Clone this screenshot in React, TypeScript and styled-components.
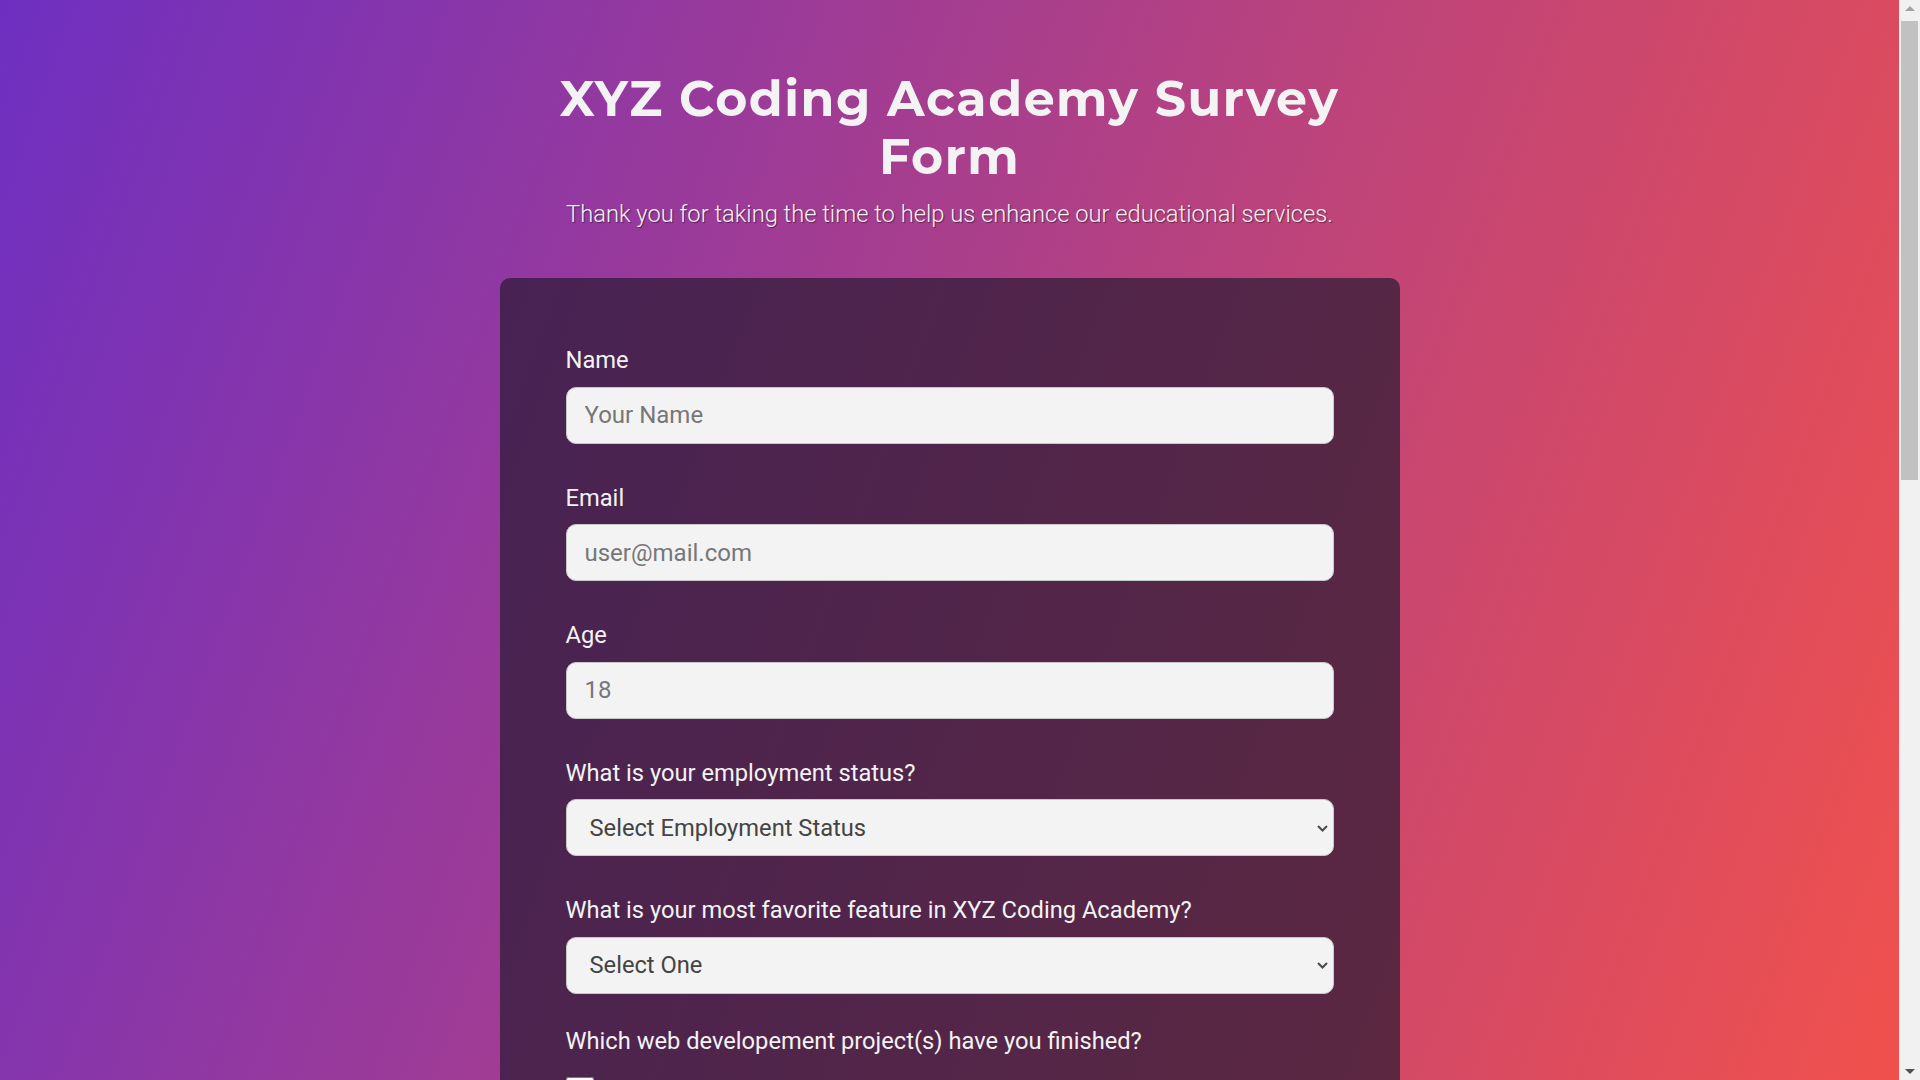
import styled, { createGlobalStyle } from "styled-components";

const GlobalStyle = createGlobalStyle`
  *, *::before, *::after {
    box-sizing: border-box;
  }

  body {
    margin: 0 21px 0 0;
    font-family: Roboto, "Liberation Sans", sans-serif;
    color: #f3f3f3;
    background: linear-gradient(110deg, #6e2fc1 0%, #f2514b 100%) fixed;
    min-height: 100vh;
  }
`

/* fake browser scrollbar, as seen in the screenshot */
const ScrollTrack = styled.div`
  position: fixed;
  top: 0;
  right: 0;
  width: 21px;
  height: 100vh;
  background: #f1f1f1;
  display: flex;
  flex-direction: column;
  align-items: center;
  padding: 0 2px;
`

const ScrollArrow = styled.div<{ $down?: boolean; $color: string }>`
  width: 0;
  height: 0;
  margin: ${(p) => (p.$down ? "auto 0 6px" : "6px 0 0")};
  border-left: 5px solid transparent;
  border-right: 5px solid transparent;
  ${(p) =>
    p.$down
      ? `border-top: 5px solid ${p.$color};`
      : `border-bottom: 5px solid ${p.$color};`}
`

const ScrollThumb = styled.div`
  width: 100%;
  height: 459px;
  margin-top: 10px;
  background: #c1c1c1;
`

const Page = styled.main`
  width: 100%;
  max-width: 900px;
  margin: 0 auto;
  padding: 70px 0 60px;
`

const Header = styled.header`
  text-align: center;
  margin-bottom: 50px;
`

const Title = styled.h1`
  font-family: Montserrat, "Open Sans", sans-serif;
  font-size: 49px;
  font-weight: 700;
  line-height: 58px;
  letter-spacing: 1.5px;
  max-width: 800px;
  margin: 0 auto;
`

const Description = styled.p`
  font-size: 23.7px;
  font-weight: 300;
  line-height: 28px;
  margin: 14px 0 0;
  text-shadow: 1px 1px 1px rgba(0, 0, 0, 0.45);
`

const Card = styled.form`
  background: rgba(40, 25, 50, 0.7);
  border-radius: 10px;
  padding: 68px 66px 60px;
`

const Group = styled.div`
  margin-bottom: 40px;
`

const Label = styled.label`
  display: block;
  font-size: 23.7px;
  line-height: 28px;
  margin: 0 0 12.5px;
`

const Legend = styled.p`
  font-size: 23.7px;
  line-height: 28px;
  margin: -7px 0 22px;
`

const fieldBase = `
  display: block;
  width: 100%;
  height: 57px;
  font-family: Roboto, "Liberation Sans", sans-serif;
  font-size: 24px;
  background: #f3f3f3;
  border: 1px solid #c8c8c8;
  border-radius: 10px;
  outline: none;
`

const Input = styled.input`
  ${fieldBase}
  padding: 0 18px;
  color: #444;

  &::placeholder {
    color: #777;
  }
`

const SelectWrap = styled.div`
  position: relative;
`

const Select = styled.select`
  ${fieldBase}
  appearance: none;
  font-size: 23.7px;
  padding: 0 30px 0 23px;
  color: #444;
`

const Chevron = styled.svg`
  position: absolute;
  top: 50%;
  right: 6px;
  width: 11px;
  height: 7px;
  margin-top: -3px;
  pointer-events: none;
`

const OptionRow = styled.label`
  display: flex;
  align-items: center;
  gap: 14px;
  font-size: 23.7px;
  line-height: 28px;
  margin-bottom: 14px;
`

const Check = styled.input`
  width: 28px;
  height: 28px;
  margin: 0;
  flex-shrink: 0;
`

const TextArea = styled.textarea`
  ${fieldBase}
  height: 150px;
  padding: 14px 18px;
  resize: vertical;
  color: #444;

  &::placeholder {
    color: #777;
  }
`

const Submit = styled.button`
  display: block;
  width: 100%;
  height: 60px;
  border: none;
  border-radius: 10px;
  background: #37af65;
  color: #f3f3f3;
  font-family: Roboto, "Liberation Sans", sans-serif;
  font-size: 24px;
  cursor: pointer;
`

const projects = [
  "Tribute Page",
  "Survey Form",
  "Product Landing Page",
  "Technical Documentation Page",
  "Personal Portfolio Webpage",
]

const recommend = ["Definitely", "Maybe", "Not sure"]

type DropdownProps = {
  id: string
  placeholder: string
  options: string[]
}

const Dropdown = ({ id, placeholder, options }: DropdownProps) => (
  <SelectWrap>
    <Select id={id} defaultValue="">
      <option value="" disabled>{placeholder}</option>
      {options.map((o) => (
        <option key={o}>{o}</option>
      ))}
    </Select>
    <Chevron viewBox="0 0 11 7">
      <polyline points="1,1 5.5,5.5 10,1" fill="none" stroke="#4a4a4a" strokeWidth="2" />
    </Chevron>
  </SelectWrap>
)

export default function App() {
  return (
    <>
      <GlobalStyle />
      <ScrollTrack>
        <ScrollArrow $color="#a3a3a3" />
        <ScrollThumb />
        <ScrollArrow $down $color="#505050" />
      </ScrollTrack>
      <Page>
        <Header>
          <Title id="title">XYZ Coding Academy Survey Form</Title>
          <Description id="description">
            Thank you for taking the time to help us enhance our educational services.
          </Description>
        </Header>
        <Card id="survey-form">
          <Group>
            <Label htmlFor="name">Name</Label>
            <Input id="name" type="text" placeholder="Your Name" />
          </Group>
          <Group>
            <Label htmlFor="email">Email</Label>
            <Input id="email" type="email" placeholder="user@mail.com" />
          </Group>
          <Group>
            <Label htmlFor="number">Age</Label>
            <Input id="number" type="number" placeholder="18" />
          </Group>
          <Group>
            <Label htmlFor="dropdown">What is your employment status?</Label>
            <Dropdown
              id="dropdown"
              placeholder="Select Employment Status"
              options={["Student", "Full Time Job", "Part Time Job", "Unemployed"]}
            />
          </Group>
          <Group>
            <Label htmlFor="feature">What is your most favorite feature in XYZ Coding Academy?</Label>
            <Dropdown
              id="feature"
              placeholder="Select One"
              options={["Challenges", "Projects", "Community"]}
            />
          </Group>
          <Group>
            <Legend>Which web developement project(s) have you finished?</Legend>
            {projects.map((p) => (
              <OptionRow key={p}>
                <Check type="checkbox" value={p} />
                {p}
              </OptionRow>
            ))}
          </Group>
          <Group>
            <Legend>Would you recommend XYZ Coding Academy to a friend?</Legend>
            {recommend.map((r) => (
              <OptionRow key={r}>
                <Check type="radio" name="recommend" value={r} />
                {r}
              </OptionRow>
            ))}
          </Group>
          <Group>
            <Label htmlFor="comments">Any comments or suggestions?</Label>
            <TextArea id="comments" placeholder="Enter your comment here..." />
          </Group>
          <Submit id="submit" type="submit">Submit</Submit>
        </Card>
      </Page>
    </>
  );
}
